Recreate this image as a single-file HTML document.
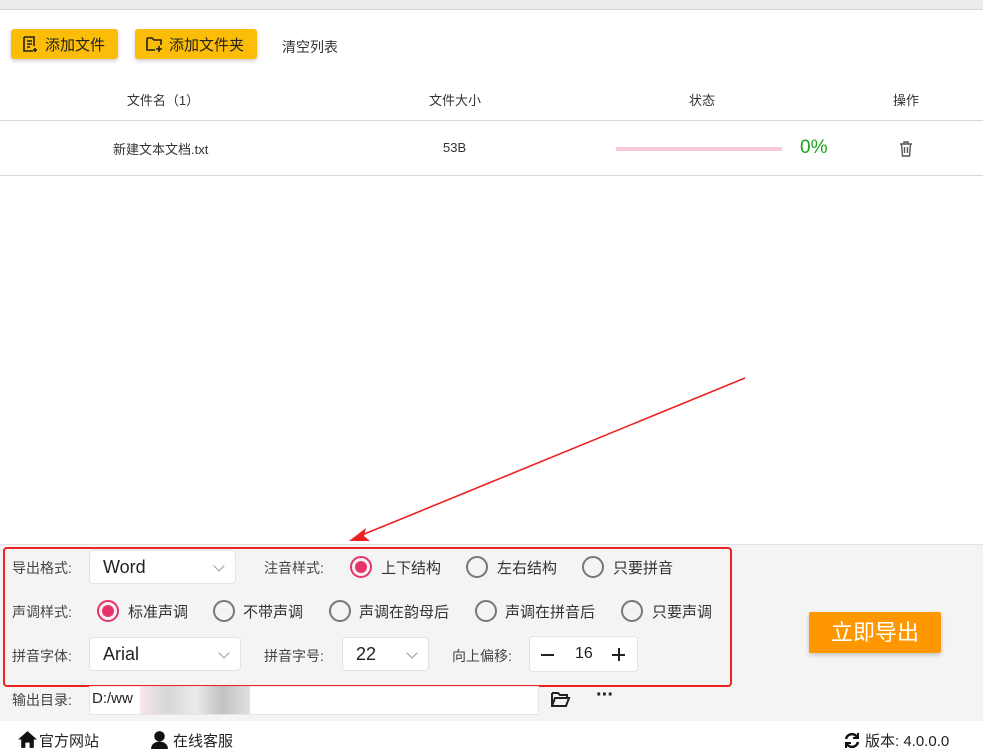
<!DOCTYPE html>
<html><head><meta charset="utf-8"><style>
*{margin:0;padding:0;box-sizing:border-box}
body{width:983px;height:754px;overflow:hidden;background:#fff;font-family:"Liberation Sans","Noto Sans CJK SC",sans-serif;color:#333;position:relative;font-size:14px}
.abs{position:absolute}
.btn{position:absolute;top:29px;height:30px;background:#fbbd08;border-radius:3px;box-shadow:0 2px 4px rgba(0,0,0,.2);font-size:15px;color:#222;display:flex;align-items:center;padding-left:10px;gap:6px}
.hdr{position:absolute;top:90px;font-size:13px;color:#333;transform:translateX(-50%)}
.lbl{position:absolute;font-size:14px;color:#444}
.sel{position:absolute;background:#fff;border:1px solid #e3e3e3;border-radius:4px;height:34px;font-size:18px;color:#222;padding-left:13px;line-height:32px}
.sel:after{content:"";position:absolute;right:12px;top:11px;width:7px;height:7px;border-right:1.5px solid #999;border-bottom:1.5px solid #999;transform:rotate(45deg)}
.r{position:absolute;width:22px;height:22px;border:2px solid #777;border-radius:50%}
.r.on{border-color:#e8336a}
.r.on:after{content:"";position:absolute;left:3px;top:3px;width:12px;height:12px;border-radius:50%;background:#e8336a}
.rt{position:absolute;font-size:15px;color:#333}
</style></head><body>
<div class="abs" style="left:0;top:0;width:983px;height:10px;background:#ececec;border-bottom:1px solid #d6d6d6"></div>
<div class="btn" style="left:11px;width:107px"><svg width="18" height="18" viewBox="0 0 18 18" fill="none" stroke="#222" stroke-width="1.6"><path d="M3 2h10v9M3 2v14h9M6 6h5M6 9h5M6 12h3M14 13v4M12 15h4"/></svg>添加文件</div>
<div class="btn" style="left:135px;width:122px"><svg width="18" height="18" viewBox="0 0 18 18" fill="none" stroke="#222" stroke-width="1.6"><path d="M2 3h5l2 2h7v5M2 3v12h8M14 11v6M11 14h6"/></svg>添加文件夹</div>
<div class="abs" style="left:282px;top:37px;font-size:14px;color:#333">清空列表</div>
<div class="hdr" style="left:163px">文件名（1）</div>
<div class="hdr" style="left:455px">文件大小</div>
<div class="hdr" style="left:702px">状态</div>
<div class="hdr" style="left:906px">操作</div>
<div class="abs" style="left:0;top:120px;width:983px;height:1px;background:#d8d8d8"></div>
<div class="abs" style="left:113px;top:139px;font-size:13px;color:#333">新建文本文档.txt</div>
<div class="abs" style="left:443px;top:140px;font-size:13px;color:#333">53B</div>
<div class="abs" style="left:616px;top:147px;width:166px;height:4px;background:#f8c8d8"></div>
<div class="abs" style="left:800px;top:137px;font-size:19px;color:#1aa31a">0%</div>
<svg class="abs" style="left:898px;top:140px" width="16" height="17" viewBox="0 0 16 17" fill="none" stroke="#555" stroke-width="1.4"><path d="M2 4h12M6 4V2h4v2M3.5 4l1 12h7l1-12M6.5 7v6M9.5 7v6"/></svg>
<div class="abs" style="left:0;top:175px;width:983px;height:1px;background:#d8d8d8"></div>
<div class="abs" style="left:0;top:544px;width:983px;height:177px;background:#f4f4f4;border-top:1px solid #e2e2e2"></div>
<div class="abs" style="left:3px;top:547px;width:729px;height:140px;border:2px solid #ee2222;border-radius:4px"></div>
<div class="lbl" style="left:12px;top:558px">导出格式:</div>
<div class="sel" style="left:89px;top:550px;width:147px">Word</div>
<div class="lbl" style="left:264px;top:558px">注音样式:</div>
<div class="r on" style="left:350px;top:556px"></div><div class="rt" style="left:381px;top:557px">上下结构</div>
<div class="r" style="left:466px;top:556px"></div><div class="rt" style="left:497px;top:557px">左右结构</div>
<div class="r" style="left:582px;top:556px"></div><div class="rt" style="left:613px;top:557px">只要拼音</div>
<div class="lbl" style="left:12px;top:602px">声调样式:</div>
<div class="r on" style="left:97px;top:600px"></div><div class="rt" style="left:128px;top:601px">标准声调</div>
<div class="r" style="left:213px;top:600px"></div><div class="rt" style="left:243px;top:601px">不带声调</div>
<div class="r" style="left:329px;top:600px"></div><div class="rt" style="left:359px;top:601px">声调在韵母后</div>
<div class="r" style="left:475px;top:600px"></div><div class="rt" style="left:505px;top:601px">声调在拼音后</div>
<div class="r" style="left:621px;top:600px"></div><div class="rt" style="left:652px;top:601px">只要声调</div>
<div class="lbl" style="left:12px;top:646px">拼音字体:</div>
<div class="sel" style="left:89px;top:637px;width:152px">Arial</div>
<div class="lbl" style="left:264px;top:646px">拼音字号:</div>
<div class="sel" style="left:342px;top:637px;width:87px">22</div>
<div class="lbl" style="left:452px;top:646px">向上偏移:</div>
<div class="abs" style="left:529px;top:636px;width:109px;height:36px;background:#fff;border:1px solid #e3e3e3;border-radius:4px"></div>
<div class="abs" style="left:541px;top:654px;width:13px;height:2px;background:#222"></div>
<div class="abs" style="left:575px;top:645px;font-size:16px;color:#222">16</div>
<div class="abs" style="left:612px;top:654px;width:13px;height:2px;background:#222"></div>
<div class="abs" style="left:617.5px;top:648px;width:2px;height:13px;background:#222"></div>
<div class="abs" style="left:809px;top:612px;width:132px;height:41px;background:#ff9800;border-radius:2px;box-shadow:0 2px 4px rgba(0,0,0,.2);color:#fff;font-size:22px;text-align:center;line-height:41px">立即导出</div>
<div class="lbl" style="left:12px;top:690px">输出目录:</div>
<div class="abs" style="left:89px;top:686px;width:450px;height:29px;background:#fff;border:1px solid #e6e6e6"></div>
<div class="abs" style="left:92px;top:690px;font-size:15px;color:#222">D:/ww</div>
<div class="abs" style="left:140px;top:686px;width:110px;height:28px;background:linear-gradient(90deg,#f4d4dc,#bbb,#ddd,#999,#ccc);opacity:.6"></div>
<svg class="abs" style="left:550px;top:690px" width="21" height="18" viewBox="0 0 21 18" fill="none" stroke="#222" stroke-width="2"><path d="M2 3h6l2 2h7v3M2 3v13h14l3-8H5L2 16"/></svg>
<div class="abs" style="left:596px;top:684px;font-size:20px;font-weight:bold;color:#222;letter-spacing:-1px">···</div>
<svg class="abs" style="left:17px;top:730px" width="21" height="19" viewBox="0 0 20 18"><path d="M10 1L1 9h3v8h4v-5h4v5h4V9h3z" fill="#111"/></svg>
<div class="abs" style="left:39px;top:730px;font-size:15px;color:#222">官方网站</div>
<svg class="abs" style="left:149px;top:729px" width="21" height="21" viewBox="0 0 20 20"><circle cx="10" cy="7" r="5" fill="#111"/><path d="M2 19c0-5 4-7 8-7s8 2 8 7z" fill="#111"/></svg>
<div class="abs" style="left:173px;top:730px;font-size:15px;color:#222">在线客服</div>
<svg class="abs" style="left:843px;top:732px" width="18" height="17" viewBox="0 0 18 17" fill="none" stroke="#111" stroke-width="2.6"><path d="M3 7a6 6 0 0 1 11-2M15 10a6 6 0 0 1-11 2"/><path d="M15 1v5h-5M3 16v-5h5" stroke-width="2"/></svg>
<div class="abs" style="left:865px;top:730px;font-size:15px;color:#222">版本: 4.0.0.0</div>
<svg class="abs" style="left:0;top:0" width="983" height="754"><path d="M745 378 L362 535" stroke="#ee2222" stroke-width="1.6"/><path d="M349 541 L366 528 L364 536 L370 541 Z" fill="#ee2222"/></svg>
</body></html>
